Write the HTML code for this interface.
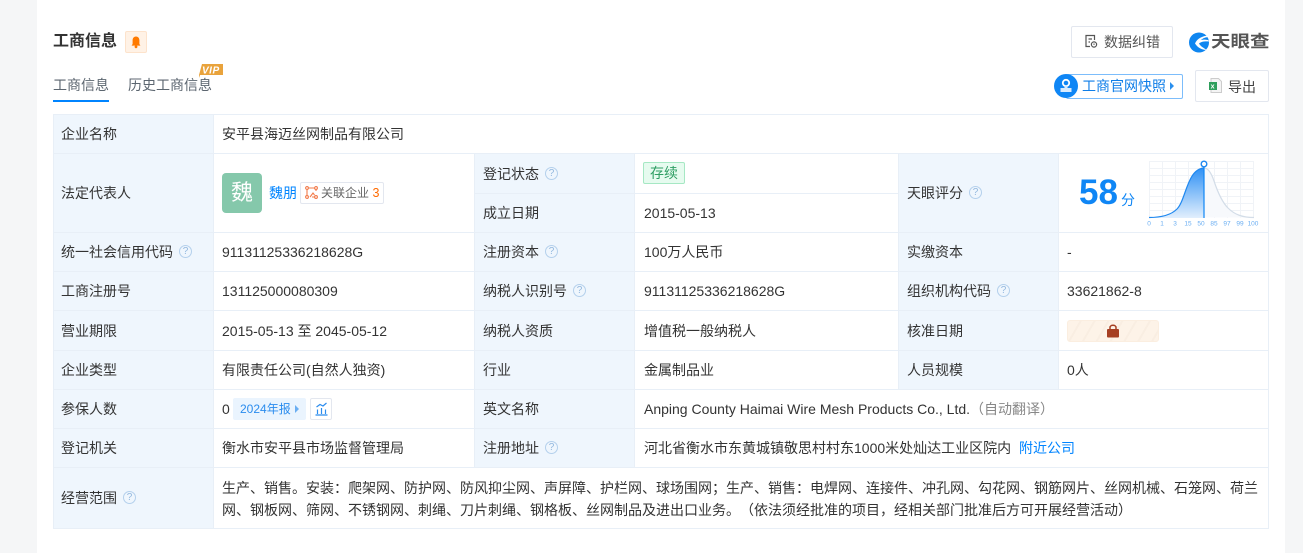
<!DOCTYPE html>
<html><head><meta charset="utf-8">
<style>
html,body{margin:0;padding:0;width:1303px;height:553px;overflow:hidden;background:#f5f6f7}
body{position:relative;font-family:"Liberation Sans","Noto Sans CJK SC",sans-serif;font-size:14px;color:#333;text-spacing-trim:space-all}
#w{position:absolute;left:37px;top:0;width:1248px;height:553px;background:#fff}
.a{position:absolute;white-space:nowrap;line-height:20px}
.bg{position:absolute;background:#eff6fd}
.h{position:absolute;height:1px;background:#e8eff7}
.v{position:absolute;width:1px;background:#e8eff7}
.q{position:absolute;width:11px;height:11px;border:1px solid #b4d0ec;border-radius:50%;color:#93b8df;font-size:10px;line-height:11px;text-align:center}
.btn{position:absolute;box-sizing:border-box;border:1px solid #e3e7ef;border-radius:2px;background:#fff}
.blue{color:#0084ff}
</style></head><body>
<div id="w"></div>

<div class="a" style="left:53px;top:31px;font-size:16px;line-height:22px;font-weight:bold;color:#333">工商信息</div>
<div style="position:absolute;left:125px;top:31px;width:20px;height:20px;background:#fff2e6;border:1px solid #fde3cc;border-radius:2px"></div>
<svg style="position:absolute;left:129px;top:35px" width="14" height="14" viewBox="0 0 14 14"><path d="M7 1.500C4.600 1.500 3.600 3.400 3.600 5.400V9L2.600 10.600H11.400L10.400 9V5.400C10.400 3.400 9.400 1.500 7 1.500Z" fill="#ff7a00"/><circle cx="7" cy="11.800" r="1.400" fill="#ff7a00"/></svg>

<div class="a" style="left:53px;top:75px;color:#5c6670">工商信息</div>
<div style="position:absolute;left:53px;top:100px;width:56px;height:2px;background:#0084ff"></div>
<div class="a" style="left:128px;top:75px;color:#5c6670">历史工商信息</div>
<svg style="position:absolute;left:199px;top:64px" width="24" height="14" viewBox="0 0 24 14"><path d="M3 0H24V11H1V14L0 11Z" fill="#e9a33c"/><text x="3" y="9.500" font-family="Liberation Sans" font-size="10" font-weight="bold" font-style="italic" fill="#fff" letter-spacing=".5">VIP</text></svg>

<div class="btn" style="left:1071px;top:26px;width:102px;height:32px"></div>
<svg style="position:absolute;left:1084px;top:34px" width="15" height="15" viewBox="0 0 15 15" fill="none" stroke="#555" stroke-width="1.200"><path d="M10.500 6V1.500H2V12.500H6"/><path d="M4.500 5H8M4.500 8H6"/><circle cx="10" cy="10.500" r="2.600"/><path d="M10 9.600V10.800"/></svg>
<div class="a" style="left:1104px;top:32px;color:#555">数据纠错</div>

<svg style="position:absolute;left:1188px;top:32px" width="22" height="21" viewBox="0 0 22 21"><circle cx="11" cy="10.500" r="10" fill="#0f86f0"/><path d="M21.500 3.500C15 3.500 9 6.500 7 11.500C9.500 15.500 14 18 18.500 18C15.500 15.500 12.500 14.500 11 11.500C13 9.500 17 9 21.500 9.500L20 8C17 7.500 15 7.500 13 8C15 6 18 5 21.500 5Z" fill="#fff"/></svg>
<div class="a" style="left:1211px;top:30px;font-size:19.500px;line-height:24px;font-weight:bold;color:#555;transform:scaleY(.85);transform-origin:left center">天眼查</div>

<div style="position:absolute;left:1066px;top:74px;width:117px;height:25px;box-sizing:border-box;border:1px solid #7cbdfb;border-radius:2px;background:#fff"></div>
<div style="position:absolute;left:1054px;top:74px;width:24px;height:24px;border-radius:50%;background:#0f86f5"></div>
<svg style="position:absolute;left:1058px;top:78px" width="16" height="16" viewBox="0 0 16 16"><circle cx="8" cy="5" r="3.200" fill="none" stroke="#fff" stroke-width="1.800"/><path d="M6.500 8H9.500V10H13.500V14H2.500V10H6.500Z" fill="#d8ebfe"/></svg>
<div class="a" style="left:1082px;top:76px;color:#0f7ee8">工商官网快照</div>
<div style="position:absolute;left:1170px;top:82px;width:0;height:0;border-left:4px solid #2a8fee;border-top:4.500px solid transparent;border-bottom:4.500px solid transparent"></div>

<div class="btn" style="left:1195px;top:70px;width:74px;height:32px"></div>
<svg style="position:absolute;left:1208px;top:78px" width="15" height="15" viewBox="0 0 15 15"><path d="M3 .5H10.500L13.500 3.500V14.500H3Z" fill="#f4f4f4" stroke="#ccc"/><rect x="1" y="4" width="8" height="8" fill="#2e9e5b"/><text x="2.600" y="10.600" font-size="7" font-weight="bold" fill="#fff" font-family="Liberation Sans">x</text></svg>
<div class="a" style="left:1228px;top:77px;color:#444">导出</div>

<!-- table backgrounds -->
<div class="bg" style="left:53px;top:114px;width:160px;height:415px"></div>
<div class="bg" style="left:474px;top:153px;width:160px;height:315px"></div>
<div class="bg" style="left:898px;top:153px;width:160px;height:236px"></div>

<div class="h" style="left:53px;top:114px;width:1216px"></div>
<div class="h" style="left:53px;top:153px;width:1216px"></div>
<div class="h" style="left:474px;top:193px;width:424px"></div>
<div class="h" style="left:53px;top:232px;width:1216px"></div>
<div class="h" style="left:53px;top:271px;width:1216px"></div>
<div class="h" style="left:53px;top:310px;width:1216px"></div>
<div class="h" style="left:53px;top:350px;width:1216px"></div>
<div class="h" style="left:53px;top:389px;width:1216px"></div>
<div class="h" style="left:53px;top:428px;width:1216px"></div>
<div class="h" style="left:53px;top:467px;width:1216px"></div>
<div class="h" style="left:53px;top:528px;width:1216px"></div>
<div class="v" style="left:53px;top:114px;height:415px"></div>
<div class="v" style="left:213px;top:114px;height:415px"></div>
<div class="v" style="left:474px;top:153px;height:315px"></div>
<div class="v" style="left:634px;top:153px;height:315px"></div>
<div class="v" style="left:898px;top:153px;height:236px"></div>
<div class="v" style="left:1058px;top:153px;height:236px"></div>
<div class="v" style="left:1268px;top:114px;height:415px"></div>

<!-- column 1 labels -->
<div class="a" style="left:61px;top:124px">企业名称</div>
<div class="a" style="left:61px;top:183px">法定代表人</div>
<div class="a" style="left:61px;top:242px">统一社会信用代码</div><div class="q" style="left:179px;top:245px">?</div>
<div class="a" style="left:61px;top:281px">工商注册号</div>
<div class="a" style="left:61px;top:321px">营业期限</div>
<div class="a" style="left:61px;top:360px">企业类型</div>
<div class="a" style="left:61px;top:399px">参保人数</div>
<div class="a" style="left:61px;top:438px">登记机关</div>
<div class="a" style="left:61px;top:488px">经营范围</div><div class="q" style="left:123px;top:491px">?</div>

<!-- column 2 values -->
<div class="a" style="left:222px;top:124px">安平县海迈丝网制品有限公司</div>
<div style="position:absolute;left:222px;top:173px;width:40px;height:40px;border-radius:4px;background:#85c8ab;color:#fff;font-size:22px;line-height:40px;text-align:center">魏</div>
<div class="a blue" style="left:269px;top:183px">魏朋</div>
<div style="position:absolute;left:300px;top:182px;width:84px;height:22px;box-sizing:border-box;border:1px solid #e3e7ef;border-radius:2px"></div>
<svg style="position:absolute;left:305px;top:186px" width="13" height="13" viewBox="0 0 13 13" fill="none" stroke="#f27b4b" stroke-width="1.100"><circle cx="2" cy="2" r="1.400"/><circle cx="11" cy="2" r="1.400"/><circle cx="2" cy="11" r="1.400"/><circle cx="11" cy="11" r="1.400"/><path d="M3.500 2H9.500M2 3.500V9.500M11 3.500V5M9.500 11H7M5 11L8 7L9.500 9"/></svg>
<div class="a" style="left:321px;top:183px;font-size:12px;color:#666">关联企业</div>
<div class="a" style="left:372.500px;top:183px;font-size:12.500px;color:#ff6a00">3</div>
<div class="a" style="left:222px;top:242px">91131125336218628G</div>
<div class="a" style="left:222px;top:281px">131125000080309</div>
<div class="a" style="left:222px;top:321px">2015-05-13 至 2045-05-12</div>
<div class="a" style="left:222px;top:360px">有限责任公司(自然人独资)</div>
<div class="a" style="left:222px;top:399px">0</div>
<div style="position:absolute;left:233px;top:398px;width:73px;height:22px;border-radius:2px;background:#eaf4fe"></div>
<div class="a" style="left:240px;top:399px;font-size:12px;color:#2b8cee">2024年报</div>
<div style="position:absolute;left:295px;top:405px;width:0;height:0;border-left:4px solid #6aaef2;border-top:4px solid transparent;border-bottom:4px solid transparent"></div>
<div class="btn" style="left:310px;top:398px;width:22px;height:22px"></div>
<svg style="position:absolute;left:315px;top:402px" width="13" height="14" viewBox="0 0 13 14" fill="none" stroke="#2b8cee" stroke-width="1.200"><path d="M.5 13H12.500M2.500 12V7.500M6.500 12V6M10.500 12V7.500M1.500 5L5 2.500L8 4L11.500 1"/></svg>
<div class="a" style="left:222px;top:438px">衡水市安平县市场监督管理局</div>
<div class="a" style="left:222px;top:477px;line-height:22px;width:1040px;white-space:normal">生产、销售。安装：爬架网、防护网、防风抑尘网、声屏障、护栏网、球场围网；生产、销售：电焊网、连接件、冲孔网、勾花网、钢筋网片、丝网机械、石笼网、荷兰网、钢板网、筛网、不锈钢网、刺绳、刀片刺绳、钢格板、丝网制品及进出口业务。（依法须经批准的项目，经相关部门批准后方可开展经营活动）</div>

<!-- column 3 labels -->
<div class="a" style="left:483px;top:164px">登记状态</div><div class="q" style="left:545px;top:167px">?</div>
<div class="a" style="left:483px;top:203px">成立日期</div>
<div class="a" style="left:483px;top:242px">注册资本</div><div class="q" style="left:545px;top:245px">?</div>
<div class="a" style="left:483px;top:281px">纳税人识别号</div><div class="q" style="left:573px;top:284px">?</div>
<div class="a" style="left:483px;top:321px">纳税人资质</div>
<div class="a" style="left:483px;top:360px">行业</div>
<div class="a" style="left:483px;top:399px">英文名称</div>
<div class="a" style="left:483px;top:438px">注册地址</div><div class="q" style="left:545px;top:441px">?</div>

<!-- column 4 values -->
<div style="position:absolute;left:643px;top:162px;width:42px;height:22px;box-sizing:border-box;border:1px solid #a6e8c4;border-radius:2px;background:#e6fbef;color:#2f9e63;line-height:20px;text-align:center">存续</div>
<div class="a" style="left:644px;top:203px">2015-05-13</div>
<div class="a" style="left:644px;top:242px">100万人民币</div>
<div class="a" style="left:644px;top:281px">91131125336218628G</div>
<div class="a" style="left:644px;top:321px">增值税一般纳税人</div>
<div class="a" style="left:644px;top:360px">金属制品业</div>
<div class="a" style="left:644px;top:399px">Anping County Haimai Wire Mesh Products Co., Ltd.<span style="color:#888">（自动翻译）</span></div>
<div class="a" style="left:644px;top:438px">河北省衡水市东黄城镇敬思村村东1000米处灿达工业区院内</div>
<div class="a blue" style="left:1019px;top:438px">附近公司</div>

<!-- column 5 -->
<div class="a" style="left:907px;top:183px">天眼评分</div><div class="q" style="left:969px;top:186px">?</div>
<div class="a" style="left:907px;top:242px">实缴资本</div>
<div class="a" style="left:907px;top:281px">组织机构代码</div><div class="q" style="left:997px;top:284px">?</div>
<div class="a" style="left:907px;top:321px">核准日期</div>
<div class="a" style="left:907px;top:360px">人员规模</div>

<!-- column 6 -->
<div class="a" style="left:1079px;top:174px;font-size:35px;line-height:38px;font-weight:bold;color:#0f86f5">58</div>
<div class="a" style="left:1121px;top:190px;font-size:14px;color:#0f86f5">分</div>
<svg style="position:absolute;left:1146px;top:158px" width="114" height="72" viewBox="0 0 114 72">
<defs><linearGradient id="g" x1="0" y1="0" x2="0" y2="1"><stop offset="0" stop-color="#2f91f5"/><stop offset="1" stop-color="#e2effd"/></linearGradient></defs>
<g stroke="#f0f3f7" stroke-width="1" fill="none"><path d="M3 3.500H107M3 10.500H107M3 17.500H107M3 24.500H107M3 31.500H107M3 38.500H107M3 45.500H107M3 52.500H107"/><path d="M3.500 3V60M16.500 3V60M29.500 3V60M42.500 3V60M55.500 3V60M68.500 3V60M81.500 3V60M94.500 3V60M107.500 3V60"/></g>
<path d="M58 10C63 10 66 17 68 23C72 35 76 44 82 50C89 57 97 59.500 108 59.500H58Z" fill="#f7f9fc"/>
<path d="M3 59.500C16 59.500 25 57 31 51C40 42 41 11 58 10V60H3Z" fill="url(#g)"/>
<path d="M58 10C63 10 66 17 68 23C72 35 76 44 82 50C89 57 97 59.500 108 59.500" fill="none" stroke="#d3dde8" stroke-width="1.200"/>
<path d="M3 59.500C16 59.500 25 57 31 51C40 42 41 11 58 10" fill="none" stroke="#1f88f0" stroke-width="1.200"/>
<path d="M58 8V60" stroke="#0f86f5" stroke-width="1.200"/>
<circle cx="58" cy="6" r="2.800" fill="#fff" stroke="#1f88f0" stroke-width="1.400"/>
<g font-family="Liberation Sans" font-size="6.500" fill="#6aaef2" text-anchor="middle"><text x="3" y="67.500">0</text><text x="16" y="67.500">1</text><text x="29" y="67.500">3</text><text x="42" y="67.500">15</text><text x="55" y="67.500">50</text><text x="68" y="67.500">85</text><text x="81" y="67.500">97</text><text x="94" y="67.500">99</text><text x="107" y="67.500">100</text></g>
</svg>
<div class="a" style="left:1067px;top:242px">-</div>
<div class="a" style="left:1067px;top:281px">33621862-8</div>
<div style="position:absolute;left:1067px;top:320px;width:92px;height:22px;box-sizing:border-box;border:1px solid #fbeee0;border-radius:3px;background:repeating-linear-gradient(120deg,#fdf3e8 0 10px,#f9eee2 10px 12px)"></div>
<svg style="position:absolute;left:1106px;top:323px" width="14" height="16" viewBox="0 0 14 16"><path d="M4 7V4.500C4 1.500 10 1.500 10 4.500V7" fill="none" stroke="#a63f22" stroke-width="1.500"/><rect x="1" y="6" width="12" height="8.500" rx="1" fill="#a63f22"/></svg>
<div class="a" style="left:1067px;top:360px">0人</div>
</body></html>
